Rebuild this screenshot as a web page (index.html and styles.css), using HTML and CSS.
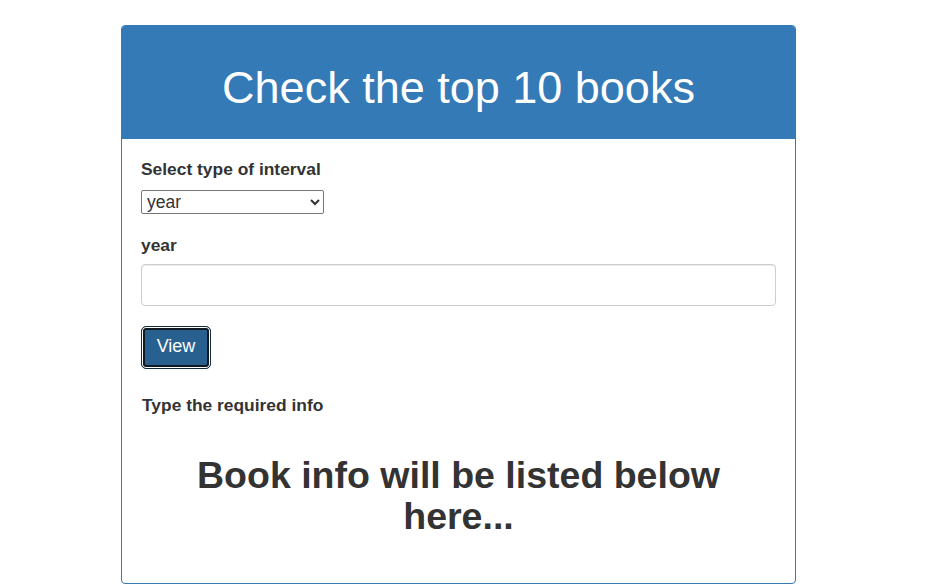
FILE: index.html
```html
<!DOCTYPE html>
<html>
<head>
<meta charset="utf-8">
<link rel="stylesheet" href="styles.css">
</head>
<body>
<div class="page">
  <div class="panel">
    <div class="panel-heading">
      <h1 class="title">Check the top 10 books</h1>
    </div>
    <div class="panel-body">
      <div class="group">
        <label class="lbl" for="interval">Select type of interval</label>
        <select id="interval" class="sel">
          <option>year</option>
          <option>month</option>
          <option>week</option>
        </select>
      </div>
      <div class="group">
        <label class="lbl lbl-tight" for="yr">year</label>
        <input id="yr" class="inp" type="text">
      </div>
      <button class="btn">View</button>
      <p class="hint">Type the required info</p>
      <h2 class="result">Book info will be listed below here...</h2>
    </div>
  </div>
</div>
</body>
</html>
```
FILE: styles.css
```css
* { box-sizing: border-box; }
html, body { margin: 0; padding: 0; background: #fff; }
body {
  font-family: "Liberation Sans", Arial, Helvetica, sans-serif;
  color: #333;
}
.page {
  padding: 25px 0 0 121px;
}
.panel {
  width: 675px;
  height: 559px;
  border: 1px solid #337ab7;
  border-radius: 4px;
  overflow: hidden;
}
.panel-heading {
  background: #337ab7;
  height: 113px;
  display: flex;
  align-items: center;
  justify-content: center;
}
.title {
  margin: 0;
  color: #fff;
  font-weight: normal;
  font-size: 45px;
  line-height: 50px;
  padding-top: 10px;
}
.panel-body {
  padding: 20px 19px 0 19px;
}
.group { padding-bottom: 21px; }
.lbl {
  display: block;
  font-weight: bold;
  font-size: 17.4px;
  line-height: 20px;
  margin-bottom: 11px;
}
.lbl-tight { margin-bottom: 9px; }
.sel {
  display: block;
  width: 183px;
  height: 24px;
  font-family: "Liberation Sans", Arial, sans-serif;
  font-size: 17.5px;
  color: #333;
  border: 1px solid #767676;
  border-radius: 2px;
  background: #fff;
  padding: 0 1px;
}
.inp {
  display: block;
  width: 100%;
  height: 42px;
  border: 1px solid #ccc;
  border-radius: 4px;
  box-shadow: inset 0 1px 1px rgba(0,0,0,.075);
  font-size: 16px;
  padding: 6px 12px;
  margin-bottom: -1px;
}
.btn {
  display: block;
  height: 43px;
  width: 70px;
  background: #286090;
  color: #fff;
  border: 1px solid #122b40;
  border-radius: 5px;
  box-shadow: inset 0 0 0 1px #fff, inset 0 0 0 3px #101820;
  font-family: "Liberation Sans", Arial, sans-serif;
  font-size: 18px;
  padding: 0 0 2px 0;
  margin: 0;
}
.hint {
  font-weight: bold;
  font-size: 17.4px;
  line-height: 20px;
  margin: 26px 0 0 1px;
}
.result {
  font-size: 37.5px;
  line-height: 41px;
  font-weight: bold;
  text-align: center;
  margin: 40px auto 0;
  width: 560px;
}
```
